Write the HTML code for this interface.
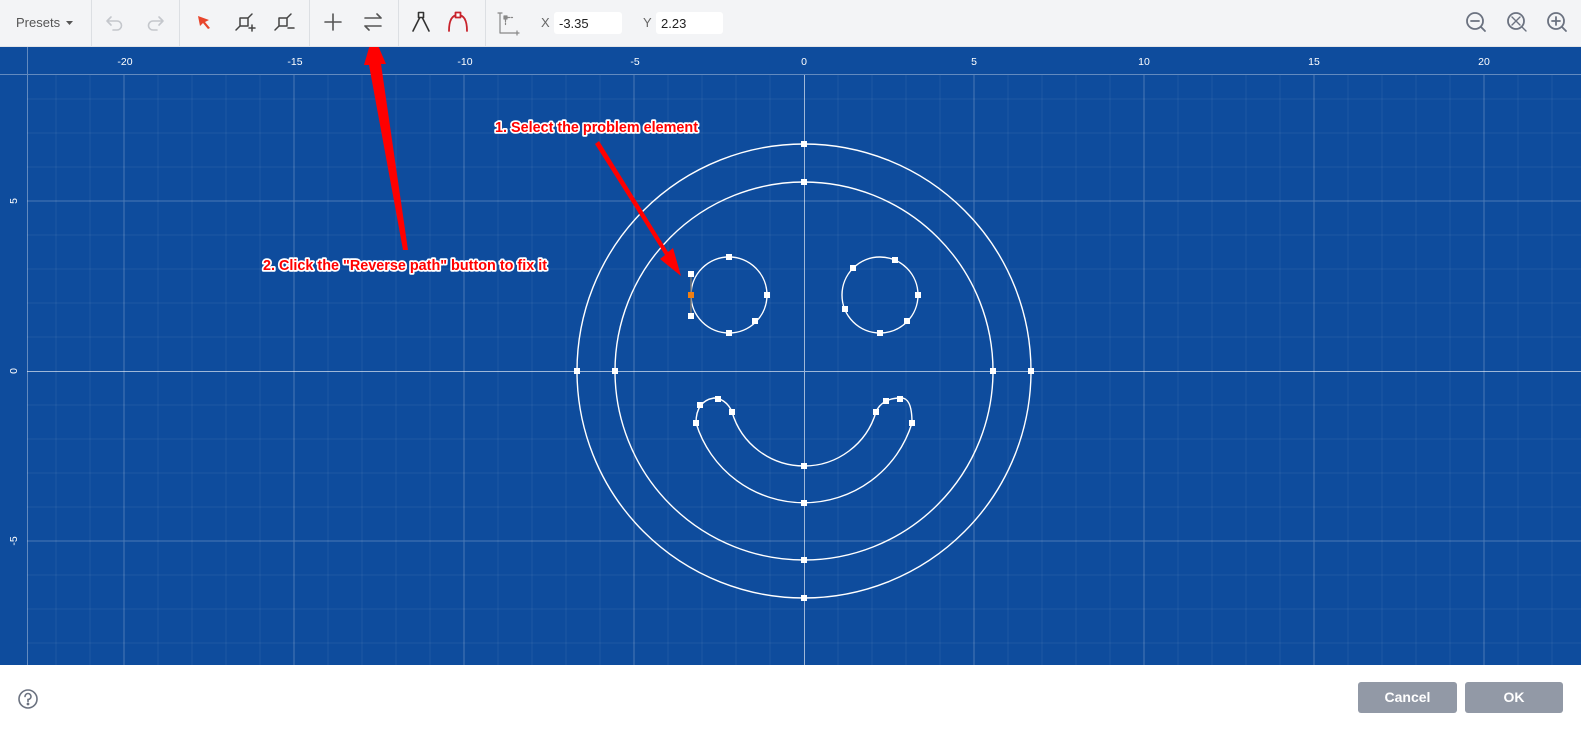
<!DOCTYPE html>
<html><head><meta charset="utf-8"><style>
*{margin:0;padding:0;box-sizing:border-box}
body{width:1581px;height:730px;overflow:hidden;background:#fff;font-family:"Liberation Sans",sans-serif;position:relative}
#tb{position:absolute;left:0;top:0;width:1581px;height:47px;background:#f3f4f6;border-bottom:1px solid #e2e4e8}
.sep{position:absolute;top:0;width:1px;height:46px;background:#dcdfe3}
.inp{position:absolute;top:12px;height:22px;background:#fff;border-radius:3px;font-size:13px;padding:4px 0 0 5px;color:#222}
.lbl{position:absolute;top:15px;font-size:13px;color:#666}
.btn{position:absolute;top:682px;height:31px;background:#9299a6;border-radius:3px;color:#fff;font-weight:bold;font-size:14px;text-align:center;line-height:31px}
</style></head><body>
<div id="tb">
<div style="position:absolute;left:16px;top:15px;font-size:13px;color:#555">Presets</div>
<svg style="position:absolute;left:66px;top:20px" width="8" height="6"><path d="M0 1H7L3.5 5Z" fill="#555"/></svg>
<div class="sep" style="left:91px"></div><div class="sep" style="left:179px"></div><div class="sep" style="left:309px"></div><div class="sep" style="left:398px"></div><div class="sep" style="left:485px"></div>
<svg style="position:absolute;left:0;top:0" width="1581" height="46" fill="none" stroke-linecap="round" stroke-linejoin="round">
<g stroke="#c4c7cc" stroke-width="1.6"><path d="M111 17L107 21L111 25M107 21H117A4 4 0 0 1 117 30H113"/><path d="M159 17L163 21L159 25M163 21H153A4 4 0 0 0 153 30H157"/></g>
<path d="M198 16L209 20L205 22L210 28L208 29L203 23L200 26Z" fill="#e8452c"/>
<g stroke="#444" stroke-width="1.5"><path d="M236 30L240 26M240 18H248V26H240ZM248 18L252 14"/><path d="M249 28H255M252 25V31" /></g>
<g stroke="#444" stroke-width="1.5"><path d="M275 30L279 26M279 18H287V26H279ZM287 18L291 14"/><path d="M288 28H294"/></g>
<g stroke="#555" stroke-width="1.6"><path d="M333 14V30M325 22H341"/><path d="M365 18H381M377 14L381 18M381 26H365M369 30L365 26"/></g>
<g stroke="#333" stroke-width="1.6"><path d="M413 31L421 15L429 31"/><rect x="418.5" y="12.5" width="5" height="5" fill="#fff"/></g>
<g stroke="#c8232c" stroke-width="1.8"><path d="M449 31C449 20 452 15 458 15C464 15 467 20 467 31"/><rect x="455.5" y="12.5" width="5" height="5" fill="#fff"/></g>
<g stroke="#888" stroke-width="1.2"><path d="M500 13V33H519M498 13H502M517 31V35"/><rect x="504" y="16" width="3" height="3" fill="#888"/><path d="M508 17.5H513M505.5 20V26" stroke-dasharray="1.5 1.5"/></g>
<g stroke="#6b7280" stroke-width="1.8"><circle cx="1475" cy="21" r="8"/><path d="M1481 27L1485 31M1471 21H1479"/>
<circle cx="1516" cy="21" r="8"/><path d="M1522 27L1526 31M1512 17L1520 25M1520 17L1512 25" stroke-width="1.4"/>
<circle cx="1556" cy="21" r="8"/><path d="M1562 27L1566 31M1552 21H1560M1556 17V25"/></g>
</svg>
<div class="lbl" style="left:541px">X</div><div class="inp" style="left:554px;width:68px">-3.35</div>
<div class="lbl" style="left:643px">Y</div><div class="inp" style="left:656px;width:67px">2.23</div>
</div>
<svg style="position:absolute;left:0;top:47px" width="1581" height="618" viewBox="0 47 1581 618">
<rect x="0" y="47" width="1581" height="618" fill="#0e4c9d"/>
<g stroke="#fff" stroke-opacity="0.07" stroke-width="1">
<path d="M56 75V665M90 75V665M158 75V665M192 75V665M226 75V665M260 75V665M328 75V665M362 75V665M396 75V665M430 75V665M498 75V665M532 75V665M566 75V665M600 75V665M668 75V665M702 75V665M736 75V665M770 75V665M838 75V665M872 75V665M906 75V665M940 75V665M1008 75V665M1042 75V665M1076 75V665M1110 75V665M1178 75V665M1212 75V665M1246 75V665M1280 75V665M1348 75V665M1382 75V665M1416 75V665M1450 75V665M1518 75V665M1552 75V665"/>
<path d="M27 99H1581M27 133H1581M27 167H1581M27 235H1581M27 269H1581M27 303H1581M27 337H1581M27 405H1581M27 439H1581M27 473H1581M27 507H1581M27 575H1581M27 609H1581M27 643H1581"/>
</g>
<g stroke="#fff" stroke-opacity="0.25" stroke-width="1">
<path d="M124 75V665M294 75V665M464 75V665M634 75V665M974 75V665M1144 75V665M1314 75V665M1484 75V665M27 201H1581M27 541H1581"/>
</g>
<path d="M0 74.5H1581M27.5 47V665" stroke="#fff" stroke-opacity="0.35"/>
<path d="M804.5 75V665M27 371.5H1581" stroke="#fff" stroke-opacity="0.6"/>
<g fill="#fff" font-size="10.5" text-anchor="middle" font-family="Liberation Sans">
<text x="125" y="65">-20</text><text x="295" y="65">-15</text><text x="465" y="65">-10</text><text x="635" y="65">-5</text><text x="804" y="65">0</text><text x="974" y="65">5</text><text x="1144" y="65">10</text><text x="1314" y="65">15</text><text x="1484" y="65">20</text>
<text transform="translate(17 201) rotate(-90)">5</text><text transform="translate(17 371) rotate(-90)">0</text><text transform="translate(17 541) rotate(-90)">-5</text>
</g>
<g fill="none" stroke="#fff" stroke-width="1.4">
<circle cx="804" cy="371" r="227"/><circle cx="804" cy="371" r="189"/>
<circle cx="729" cy="295" r="38"/><circle cx="880" cy="295" r="38"/>
<path d="M696 423A113 113 0 0 0 912 423C912 405 908 397 900 398C890 398 880 402 876 412A75 75 0 0 1 732 412C728 402 720 398 714 398C702 400 696 408 696 423Z"/>
</g>
<path d="M691 274V316" stroke="#777" stroke-width="1.5"/>
<g fill="#fff">
<rect x="801" y="141" width="6" height="6"/><rect x="801" y="179" width="6" height="6"/><rect x="801" y="557" width="6" height="6"/><rect x="801" y="595" width="6" height="6"/>
<rect x="574" y="368" width="6" height="6"/><rect x="612" y="368" width="6" height="6"/><rect x="990" y="368" width="6" height="6"/><rect x="1028" y="368" width="6" height="6"/>
<rect x="726" y="254" width="6" height="6"/><rect x="764" y="292" width="6" height="6"/><rect x="752" y="318" width="6" height="6"/><rect x="726" y="330" width="6" height="6"/><rect x="688" y="271" width="6" height="6"/><rect x="688" y="313" width="6" height="6"/>
<rect x="850" y="265" width="6" height="6"/><rect x="892" y="257" width="6" height="6"/><rect x="915" y="292" width="6" height="6"/><rect x="904" y="318" width="6" height="6"/><rect x="877" y="330" width="6" height="6"/><rect x="842" y="306" width="6" height="6"/>
<rect x="693" y="420" width="6" height="6"/><rect x="697" y="402" width="6" height="6"/><rect x="715" y="396" width="6" height="6"/><rect x="729" y="409" width="6" height="6"/>
<rect x="873" y="409" width="6" height="6"/><rect x="883" y="398" width="6" height="6"/><rect x="897" y="396" width="6" height="6"/><rect x="909" y="420" width="6" height="6"/>
<rect x="801" y="463" width="6" height="6"/><rect x="801" y="500" width="6" height="6"/>
</g>
<rect x="688" y="292" width="6" height="6" fill="#f07f13"/>
<g fill="#f00">
<path d="M403 250L408 250L381 64L386 64L373 34L364 65L369 65Z"/>
<path d="M595 144L599 141L668 252L673 248L681 276L660 259L665 255Z"/>
</g>
<g font-family="Liberation Sans" font-weight="bold" font-size="15" fill="#f00" stroke="#fff" stroke-width="3.5" paint-order="stroke" stroke-linejoin="round">
<text x="495" y="132" textLength="203" lengthAdjust="spacingAndGlyphs">1. Select the problem element</text>
<text x="263" y="270" textLength="284" lengthAdjust="spacingAndGlyphs">2. Click the "Reverse path" button to fix it</text>
</g>
</svg>
<svg style="position:absolute;left:17px;top:688px" width="22" height="22" fill="none" stroke="#6b7280" stroke-width="1.6"><circle cx="11" cy="11" r="9"/><path d="M8 8.5A3 3 0 1 1 11 11.5V13.5" stroke-linecap="round"/><circle cx="11" cy="16" r="0.6" fill="#6b7280"/></svg>
<div class="btn" style="left:1358px;width:99px">Cancel</div>
<div class="btn" style="left:1465px;width:98px">OK</div>
</body></html>
